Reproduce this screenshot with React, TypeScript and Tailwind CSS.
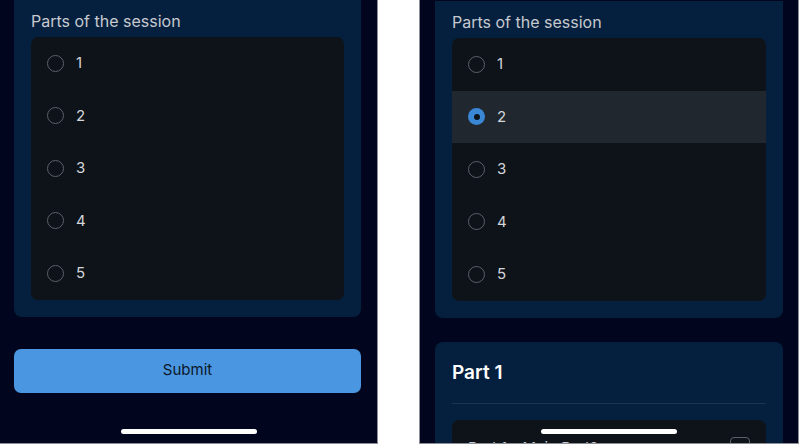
import { useState } from 'react';

const options = ['1', '2', '3', '4', '5'];

const Radio = ({ checked }: { checked: boolean }) => {
  if (checked) {
    return (
      <span className="flex h-[17px] w-[17px] items-center justify-center rounded-full bg-[#3a87d6]">
        <span className="h-[6px] w-[6px] rounded-full bg-[#0d1218]" />
      </span>
    );
  }
  return <span className="h-[17px] w-[17px] rounded-full border border-[#5b6169]" />;
};

const PartsList = ({ selected, onSelect }: { selected: string; onSelect: (v: string) => void }) => (
  <div className="overflow-hidden rounded-[7px] bg-[#0e131a]">
    {options.map((opt) => (
      <button
        key={opt}
        type="button"
        onClick={() => onSelect(opt)}
        className={`flex h-[52.5px] w-full items-center gap-[12px] pl-4 text-left ${
          selected === opt ? 'bg-[#21272e]' : ''
        }`}
      >
        <Radio checked={selected === opt} />
        <span className="text-[15px] text-[#d3d6db]">{opt}</span>
      </button>
    ))}
  </div>
);

const SessionCard = ({ selected, onSelect }: { selected: string; onSelect: (v: string) => void }) => (
  <div className="rounded-b-[8px] bg-[#05203e] px-[17px] pb-[17px] pt-[11px]">
    <h2 className="mb-[6px] text-[16px] leading-[20px] text-[#c6cad0]">Parts of the session</h2>
    <PartsList selected={selected} onSelect={onSelect} />
  </div>
);

const HomeBar = () => (
  <div className="absolute bottom-[9px] left-1/2 h-[5px] w-[136px] -translate-x-1/2 rounded-full bg-white" />
);

const App = () => {
  const [left, setLeft] = useState('');
  const [right, setRight] = useState('2');

  return (
    <div className="flex h-[445px] w-[799px] overflow-hidden bg-white font-['Inter',sans-serif]">
      <div className="relative h-[444px] w-[378px] shrink-0 overflow-hidden border-b border-r border-[#8b8e94] bg-[#01061e] pl-[14px] pr-[16px]">
        <SessionCard selected={left} onSelect={setLeft} />
        <button
          type="button"
          className="mt-[32px] h-[44px] w-full rounded-[7px] bg-[#4b96e0] text-[15px] text-[#0a1628]"
        >
          Submit
        </button>
        <HomeBar />
      </div>

      <div className="w-[41px] shrink-0" />

      <div className="relative h-[444px] w-[380px] shrink-0 overflow-hidden border-b border-l border-r border-[#8b8e94] bg-[#01061e] pl-[15px] pr-[15px]">
        <div className="pt-px">
          <SessionCard selected={right} onSelect={setRight} />
        </div>
        <div className="mt-[24px] rounded-[8px] bg-[#05203e] px-[17px] pt-[19px]">
          <h3 className="pb-[18px] text-[19px] font-semibold leading-[24px] text-white">Part 1</h3>
          <div className="h-px bg-[#1a3554]" />
          <div className="mt-[16px] flex items-start justify-between rounded-[7px] bg-[#0e131a] px-[16px] pt-[17px]">
            <span className="text-[15px] text-[#c6cad0]">Part 1 - Main Part?</span>
            <span className="h-[20px] w-[20px] rounded-[4px] border border-[#5b6169]" />
          </div>
        </div>
        <HomeBar />
      </div>
    </div>
  );
};

export default App;
